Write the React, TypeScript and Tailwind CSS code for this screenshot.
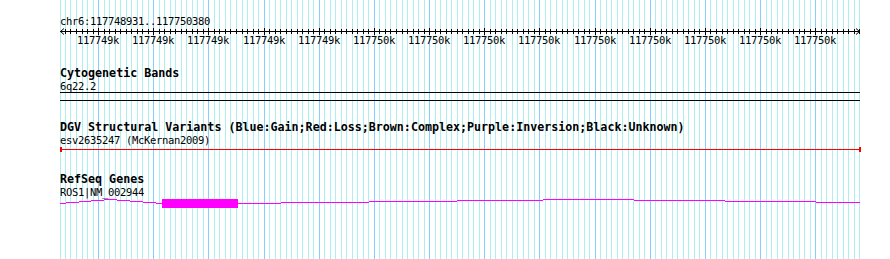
import React from "react";

const START = 117748931;
const END = 117750380;
const LEFT = 60;
const WIDTH = 800;
const SCALE = WIDTH / (END - START + 1);

function px(bp: number) {
  return Math.round(LEFT + (bp - START) * SCALE);
}

const minorTicks: number[] = [];
for (let bp = Math.ceil(START / 10) * 10; bp <= END; bp += 10) minorTicks.push(bp);
const majorTicks = minorTicks.filter((bp) => bp % 100 === 0);

const mono = "font-['DejaVu_Sans_Mono','Liberation_Mono',monospace]";

function Grid() {
  return (
    <svg className="absolute inset-0" width={890} height={259} shapeRendering="crispEdges">
      <line x1={60.5} y1={0} x2={60.5} y2={259} stroke="#afeeee" />
      {minorTicks.map((bp) => (
        <line
          key={bp}
          x1={px(bp) + 0.5}
          y1={0}
          x2={px(bp) + 0.5}
          y2={259}
          stroke={bp % 100 === 0 ? "#87cefa" : "#afeeee"}
        />
      ))}
    </svg>
  );
}

function Ruler() {
  return (
    <svg width={890} height={20} className="-ml-[60px] block overflow-visible" shapeRendering="crispEdges">
      <line x1={60} y1={3.5} x2={860} y2={3.5} stroke="#000" />
      <polyline points="64,0.5 60.5,3.5 64,6.5" fill="none" stroke="#000" shapeRendering="auto" />
      <polyline points="856,0.5 859.5,3.5 856,6.5" fill="none" stroke="#000" shapeRendering="auto" />
      {minorTicks.map((bp) => {
        const x = px(bp) + 0.5;
        const major = bp % 100 === 0;
        return <line key={bp} x1={x} y1={major ? 0 : 1} x2={x} y2={major ? 7 : 6} stroke="#000" />;
      })}
      {majorTicks.map((bp) => (
        <text
          key={bp}
          x={px(bp)}
          y={16}
          textAnchor="middle"
          fontFamily="'DejaVu Sans Mono', 'Liberation Mono', monospace"
          fontSize={10.5}
          letterSpacing={-0.32}
          fill="#000"
        >
          {Math.round(bp / 1000)}k
        </text>
      ))}
    </svg>
  );
}

function TrackTitle({ children }: { children: React.ReactNode }) {
  return <div className={`${mono} h-[13px] text-[11.67px] font-bold leading-[13px] whitespace-nowrap text-black`}>{children}</div>;
}

function TrackLabel({ children, h }: { children: React.ReactNode; h: string }) {
  return (
    <div className={`${mono} ${h} text-[10.5px] tracking-[-0.32px] leading-[13px] whitespace-nowrap text-black`}>
      {children}
    </div>
  );
}

export default function App() {
  return (
    <div className="relative w-[890px] h-[259px] overflow-hidden bg-white">
      <Grid />
      <div className="relative pl-[60px] w-[860px]">
        <div className="pt-[15px]">
          <TrackLabel h="h-[13px]">chr6:117748931..117750380</TrackLabel>
          <Ruler />
        </div>

        <div className="mt-[19px]">
          <TrackTitle>Cytogenetic Bands</TrackTitle>
          <TrackLabel h="h-[12px]">6q22.2</TrackLabel>
          <svg width={800} height={10} className="block" shapeRendering="crispEdges">
            <line x1={0} y1={0.5} x2={800} y2={0.5} stroke="#000" />
            <line x1={0} y1={8.5} x2={800} y2={8.5} stroke="#000" />
          </svg>
        </div>

        <div className="mt-[19px]">
          <TrackTitle>DGV Structural Variants (Blue:Gain;Red:Loss;Brown:Complex;Purple:Inversion;Black:Unknown)</TrackTitle>
          <TrackLabel h="h-[11px]">esv2635247 (McKernan2009)</TrackLabel>
          <svg width={802} height={8} className="block overflow-visible" shapeRendering="crispEdges">
            <line x1={0} y1={4.5} x2={800} y2={4.5} stroke="#ff0000" />
            <rect x={0} y={2} width={2} height={5} fill="#ff0000" />
            <rect x={799} y={2} width={2} height={5} fill="#ff0000" />
          </svg>
        </div>

        <div className="mt-[20px]">
          <TrackTitle>RefSeq Genes</TrackTitle>
          <TrackLabel h="h-[12px]">ROS1|NM_002944</TrackLabel>
          <svg width={800} height={12} className="block" shapeRendering="crispEdges">
            <polyline points="0,5.5 50,1.5 102,5.5" fill="none" stroke="#ff00ff" />
            <polyline points="178,5.5 528,1.5 800,4.5" fill="none" stroke="#ff00ff" />
            <rect x={102} y={1} width={76} height={9} fill="#ff00ff" />
          </svg>
        </div>
      </div>
    </div>
  );
}
